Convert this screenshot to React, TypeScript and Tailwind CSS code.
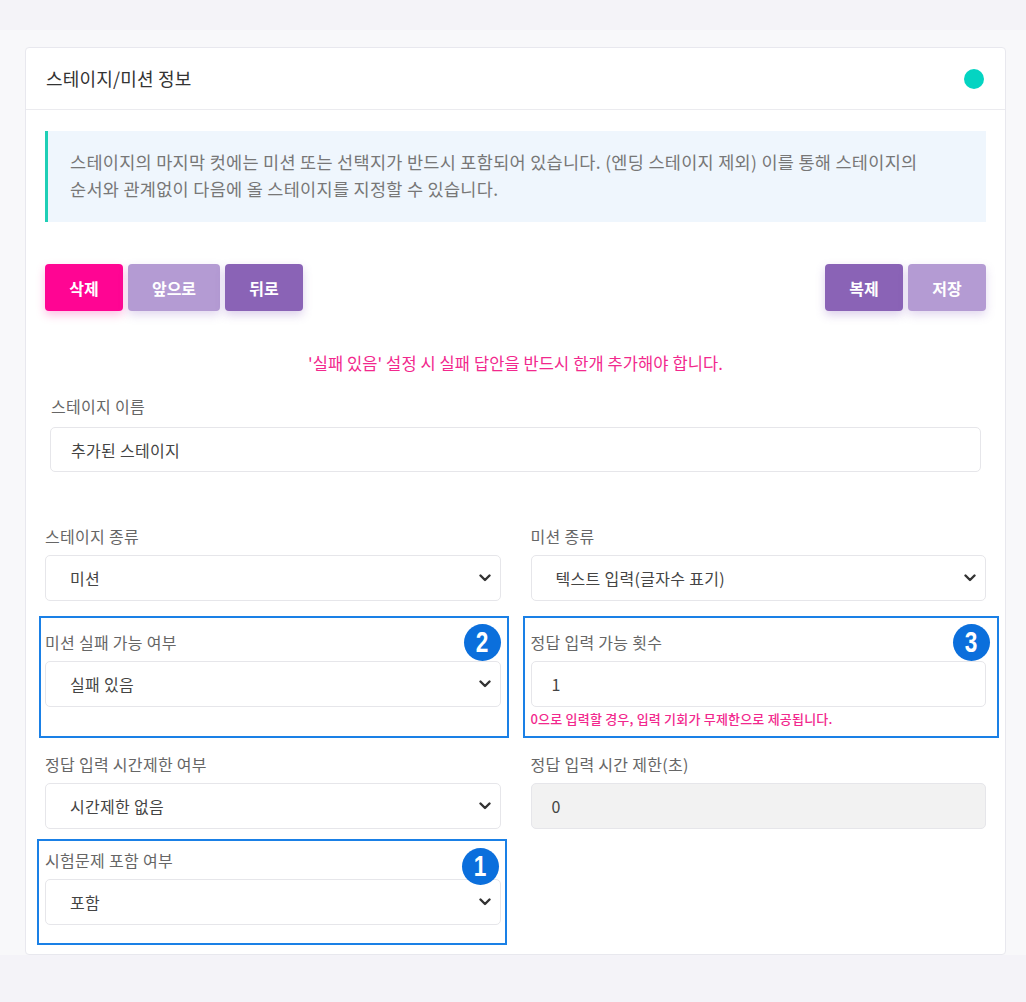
import React from "react";

const FONT = { fontFamily: '"Noto Sans CJK KR", "Noto Sans", sans-serif' };

function Chevron() {
  return (
    <svg width="12" height="8" viewBox="0 0 12 8" className="shrink-0">
      <path d="M1.5 1.5 L6 6 L10.5 1.5" fill="none" stroke="#333" strokeWidth="2.4" strokeLinecap="round" strokeLinejoin="round" />
    </svg>
  );
}

function Label({ children }: { children: React.ReactNode }) {
  return <div className="text-[16px] tracking-[0.3px] leading-[22px] text-[#666] mb-[8px]">{children}</div>;
}

function Select({ value }: { value: string }) {
  return (
    <div className="h-[46px] rounded-[5px] border border-[#e6e6ea] bg-white flex items-center justify-between pl-[24px] pr-[9px] text-[16px] tracking-[0.3px] text-[#444]">
      <span>{value}</span>
      <Chevron />
    </div>
  );
}

function Input({ value, disabled }: { value: string; disabled?: boolean }) {
  return (
    <div
      className={
        "h-[46px] rounded-[5px] border border-[#e6e6ea] flex items-center pl-[20px] text-[16px] text-[#444] " +
        (disabled ? "bg-[#f2f2f2]" : "bg-white")
      }
    >
      {value}
    </div>
  );
}

function Badge({ n, className }: { n: string; className: string }) {
  return (
    <div
      className={
        "absolute w-[37px] h-[37px] rounded-full bg-[#0b6fdc] flex items-center justify-center text-white text-[29px] font-bold leading-none " +
        className
      }
      style={{ fontFamily: '"Liberation Sans", Arial, sans-serif' }}
    >
      <span className="inline-block scale-x-[0.78]">{n}</span>
    </div>
  );
}

const btn = "h-[47px] rounded-[4px] text-white text-[16px] font-bold";

export default function App() {
  return (
    <div className="min-h-[1002px] bg-[#f4f3f8] pt-[30px]" style={FONT}>
      <div className="bg-[#f8f8fa] pl-[25px] pr-[20px] pt-[17px]">
        <div className="bg-white border border-[#e8e8ee] rounded-[4px]">
          <div className="h-[62px] px-[20px] flex items-center justify-between border-b border-[#ebebef]">
            <div className="text-[18px] tracking-[0.2px] text-[#333]">스테이지/미션 정보</div>
            <div className="w-[20px] h-[20px] rounded-full bg-[#04d4c2] mr-[1px]" />
          </div>

          <div className="px-[19px] pt-[21px] pb-[29px]">
            <div className="bg-[#eff6fd] border-l-[3px] border-[#1fcfb6] h-[91px] pl-[22px] pt-[17px] text-[17.5px] tracking-[0.3px] leading-[27px] text-[#777]">
              <div>스테이지의 마지막 컷에는 미션 또는 선택지가 반드시 포함되어 있습니다. (엔딩 스테이지 제외) 이를 통해 스테이지의</div>
              <div>순서와 관계없이 다음에 올 스테이지를 지정할 수 있습니다.</div>
            </div>

            <div className="mt-[42px] flex justify-between">
              <div className="flex gap-[5px]">
                <button className={btn + " w-[78px] bg-[#ff0593] shadow-[0_4px_10px_rgba(255,5,147,0.25)]"}>삭제</button>
                <button className={btn + " w-[92px] bg-[#b49bd3] shadow-[0_4px_10px_rgba(140,100,190,0.25)]"}>앞으로</button>
                <button className={btn + " w-[78px] bg-[#8a63b6] shadow-[0_4px_10px_rgba(140,100,190,0.3)]"}>뒤로</button>
              </div>
              <div className="flex gap-[5px]">
                <button className={btn + " w-[78px] bg-[#8a63b6] shadow-[0_4px_10px_rgba(140,100,190,0.3)]"}>복제</button>
                <button className={btn + " w-[78px] bg-[#b49bd3] shadow-[0_4px_10px_rgba(140,100,190,0.25)]"}>저장</button>
              </div>
            </div>

            <div className="mt-[42px] text-center text-[16.5px] tracking-[0.1px] leading-[20px] text-[#f2288d]">
              '실패 있음' 설정 시 실패 답안을 반드시 한개 추가해야 합니다.
            </div>

            <div className="mt-[22px] px-[5px]">
              <div className="text-[16px] tracking-[0.3px] leading-[22px] text-[#666] mb-[10px] pl-[1px]">스테이지 이름</div>
              <div className="h-[45px] rounded-[5px] border border-[#e6e6ea] bg-white flex items-center pl-[20px] text-[16px] tracking-[0.3px] text-[#444]">
                추가된 스테이지
              </div>
            </div>

            <div className="mt-[53px] grid grid-cols-2 gap-x-[30px]">
              <div>
                <Label>스테이지 종류</Label>
                <Select value="미션" />
              </div>
              <div>
                <Label>미션 종류</Label>
                <Select value="텍스트 입력(글자수 표기)" />
              </div>
            </div>

            <div className="mt-[30px] grid grid-cols-2 gap-x-[30px]">
              <div className="relative">
                <div className="absolute -top-[15px] -left-[6px] -right-[8.5px] -bottom-[11px] border-2 border-[#1a80e6] pointer-events-none" />
                <Badge n="2" className="-top-[7.5px] right-0" />
                <Label>미션 실패 가능 여부</Label>
                <Select value="실패 있음" />
              </div>
              <div className="relative">
                <div className="absolute -top-[15px] -left-[7.5px] -right-[13px] -bottom-[11px] border-2 border-[#1a80e6] pointer-events-none" />
                <Badge n="3" className="-top-[7.5px] -right-[3.5px]" />
                <Label>정답 입력 가능 횟수</Label>
                <Input value="1" />
                <div className="mt-[4px] text-[13px] tracking-[0.2px] leading-[16px] text-[#f2288d] font-medium">
                  0으로 입력할 경우, 입력 기회가 무제한으로 제공됩니다.
                </div>
              </div>
            </div>

            <div className="mt-[26px] grid grid-cols-2 gap-x-[30px]">
              <div>
                <Label>정답 입력 시간제한 여부</Label>
                <Select value="시간제한 없음" />
              </div>
              <div>
                <Label>정답 입력 시간 제한(초)</Label>
                <Input value="0" disabled />
              </div>
            </div>

            <div className="mt-[20px] grid grid-cols-2 gap-x-[30px]">
              <div className="relative">
                <div className="absolute -top-[10px] -left-[8px] -right-[6.5px] -bottom-[20px] border-2 border-[#1a80e6] pointer-events-none" />
                <Badge n="1" className="-top-[1.5px] right-[2px]" />
                <Label>시험문제 포함 여부</Label>
                <Select value="포함" />
              </div>
              <div />
            </div>
          </div>
        </div>
      </div>
    </div>
  );
}
